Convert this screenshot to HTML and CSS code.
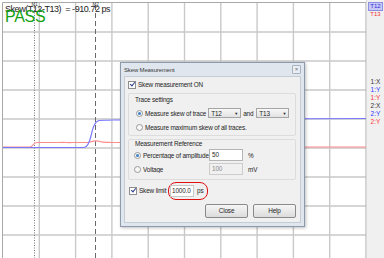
FILE: index.html
```html
<!DOCTYPE html>
<html lang="en">
<head>
	<meta charset="UTF-8">
	<title>Skew Measurement</title>
	<link rel="stylesheet" href="styles.css">
</head>
<body>
	<div id="wrap">
		<div id="plot">
			<svg class="scope" width="366" height="258" viewBox="0 0 366 258">
				<g class="grid">
					<line x1="39.3" y1="3" x2="39.3" y2="258"/>
					<line x1="75.6" y1="3" x2="75.6" y2="258"/>
					<line x1="111.9" y1="3" x2="111.9" y2="258"/>
					<line x1="148.2" y1="3" x2="148.2" y2="258"/>
					<line x1="184.5" y1="3" x2="184.5" y2="258"/>
					<line x1="220.8" y1="3" x2="220.8" y2="258"/>
					<line x1="257.1" y1="3" x2="257.1" y2="258"/>
					<line x1="293.4" y1="3" x2="293.4" y2="258"/>
					<line x1="329.7" y1="3" x2="329.7" y2="258"/>
					<line x1="3" y1="32" x2="366" y2="32"/>
					<line x1="3" y1="61" x2="366" y2="61"/>
					<line x1="3" y1="90" x2="366" y2="90"/>
					<line x1="3" y1="119" x2="366" y2="119"/>
					<line x1="3" y1="148" x2="366" y2="148"/>
					<line x1="3" y1="177" x2="366" y2="177"/>
					<line x1="3" y1="206" x2="366" y2="206"/>
					<line x1="3" y1="235" x2="366" y2="235"/>
				</g>
				<path class="frame" d="M2.5 258 V2.5 H366 V258"/>
				<!-- markers -->
				<line class="m1" x1="34.5" y1="5" x2="34.5" y2="258"/>
				<line class="m2" x1="95.5" y1="5" x2="95.5" y2="258"/>
				<text class="mlabel" x="31.5" y="6">M1</text>
				<text class="mlabel" x="92.5" y="6">M2</text>
				<!-- traces -->
				<path class="tr-red" d="M3 147 H30 C33 147 33 142.5 37 142.5 H60 C64 142 68 143 72 142.5 H88 C92 141 96 140 100 141.5 C104 143 108 142 112 142.5 H200 C204 142.5 206 147 210 147 H366"/>
				<path class="tr-blue" d="M3 147.5 H84 C87 147.5 89 144 91 136 C93 126 95 121 99 120.5 C103 120 108 120.5 112 120 H200 C230 119.5 260 118.5 366 118.5"/>
			</svg>
			<div class="readout">Skew(T12-T13)&nbsp; = -910.72 ps</div>
			<div class="pass">PASS</div>

			<div class="dlg">
				<div class="dlg-title">
					<span>Skew Measurement</span>
					<span class="dlg-x">×</span>
				</div>
				<div class="dlg-body">
					<div class="row top-row">
						<span class="chk on"></span>Skew measurement ON
					</div>
					<div class="group g1">
						<div class="g-label">Trace settings</div>
						<div class="row">
							<span class="radio on"></span><span>Measure skew of trace</span>
							<span class="select">T12<i>▼</i></span>
							<span class="and">and</span>
							<span class="select">T13<i>▼</i></span>
						</div>
						<div class="row">
							<span class="radio"></span>Measure maximum skew of all traces.
						</div>
					</div>
					<div class="group g2">
						<div class="g-label">Measurement Reference</div>
						<div class="row">
							<span class="radio on"></span><span class="lbl">Percentage of amplitude</span>
							<span class="field">50</span><span class="unit">%</span>
						</div>
						<div class="row">
							<span class="radio"></span><span class="lbl">Voltage</span>
							<span class="field off">100</span><span class="unit">mV</span>
						</div>
					</div>
					<div class="row limit-row">
						<span class="chk on"></span><span class="lbl-l">Skew limit</span>
						<span class="ring"><span class="field lim">1000.0</span><span class="ps">ps</span></span>
					</div>
					<div class="btns">
						<span class="btn">Close</span>
						<span class="btn">Help</span>
					</div>
				</div>
			</div>
		</div>
		<div id="side">
			<div class="tags">
				<span class="tag t12">T12</span>
				<span class="tag t13">T13</span>
			</div>
			<div class="chans">
				<span class="c-k">1:X</span>
				<span class="c-b">1:Y</span>
				<span class="c-r">1:Y</span>
				<span class="c-k">2:X</span>
				<span class="c-b">2:Y</span>
				<span class="c-r">2:Y</span>
			</div>
		</div>
	</div>
</body>
</html>
```

FILE: styles.css
```css
body{
	margin: 0px;
	padding: 0px;
	font-family: "Liberation Sans", Arial, sans-serif;
	background: #ffffff;
}
#wrap{
	width: 384px;
	height: 258px;
	display: flex;
	overflow: hidden;
}
#plot{
	width: 366px;
	height: 258px;
	position: relative;
	background: #ffffff;
}
.scope{
	display: block;
}
.grid line{
	stroke: #c9c9c9;
	stroke-width: 1.4;
}
.frame{
	fill: none;
	stroke: #a9a9a9;
	stroke-width: 1;
}
.m1{
	stroke: #7a7a7a;
	stroke-width: 1;
	stroke-dasharray: 1 1.5;
}
.m2{
	stroke: #6a6a6a;
	stroke-width: 1;
	stroke-dasharray: 5 3;
}
.mlabel{
	font-size: 4.5px;
	fill: #333333;
	font-family: "Liberation Sans", Arial, sans-serif;
}
.tr-red{
	fill: none;
	stroke: #ff8c8c;
	stroke-width: 1.2;
}
.tr-blue{
	fill: none;
	stroke: #7878ff;
	stroke-width: 1.2;
}
.readout{
	position: absolute;
	left: 5px;
	top: 4px;
	font-size: 9px;
	letter-spacing: -0.45px;
	color: #222222;
	white-space: nowrap;
}
.pass{
	position: absolute;
	left: 5px;
	top: 8px;
	font-size: 16px;
	line-height: 18px;
	color: #13a113;
	letter-spacing: -0.3px;
}

/* dialog */
.dlg{
	position: absolute;
	left: 120px;
	top: 62px;
	width: 183px;
	height: 163px;
	border: 1px solid #8d9aab;
	background: #dfe6ee;
	box-shadow: 1px 1px 3px rgba(0,0,0,0.25);
	font-size: 6.4px;
	letter-spacing: -0.15px;
	color: #1e1e1e;
	display: flex;
	flex-direction: column;
}
.dlg-title{
	height: 13px;
	display: flex;
	align-items: center;
	justify-content: space-between;
	padding: 0px 3px 0px 3px;
	font-size: 6px;
	color: #3a3a3a;
}
.dlg-x{
	width: 7px;
	height: 7px;
	border: 1px solid #a9b3c0;
	background: #e9eef4;
	font-size: 6px;
	line-height: 7px;
	text-align: center;
	color: #666666;
	border-radius: 1px;
}
.dlg-body{
	flex: 1;
	margin: 0px 3px 3px 3px;
	background: #f0f0f0;
	border: 1px solid #c4ccd6;
	padding: 0px 4px 0px 3px;
}
.row{
	display: flex;
	align-items: center;
	height: 14px;
	white-space: nowrap;
}
.top-row{
	height: 15px;
}
.chk{
	width: 6px;
	height: 6px;
	border: 1px solid #8e8e8e;
	background: #ffffff;
	margin-right: 2px;
	position: relative;
}
.chk.on::after{
	content: "";
	position: absolute;
	left: 1.5px;
	top: -0.5px;
	width: 2px;
	height: 4px;
	border-right: 1.2px solid #2c3e8a;
	border-bottom: 1.2px solid #2c3e8a;
	transform: rotate(40deg);
}
.group{
	border: 1px solid #dcdcdc;
	border-radius: 2px;
	padding: 0px 4px;
}
.g1{
	height: 41px;
	margin-top: 1px;
}
.g2{
	height: 39px;
	margin-top: 3px;
}
.g-label{
	height: 12px;
	line-height: 12px;
	padding-left: 2px;
}
.g2 .g-label{
	height: 8px;
	line-height: 8px;
}
.g1 .row{
	height: 14px;
	padding-left: 3px;
}
.g2 .row{
	height: 14px;
	padding-left: 1px;
}
.radio{
	width: 5px;
	height: 5px;
	border: 1px solid #9a9a9a;
	border-radius: 50%;
	background: #f8f8f8;
	margin-right: 2px;
	position: relative;
}
.radio.on::after{
	content: "";
	position: absolute;
	left: 1px;
	top: 1px;
	width: 3px;
	height: 3px;
	border-radius: 50%;
	background: #3d7fc4;
}
.select{
	width: 33px;
	height: 10px;
	border: 1px solid #a5a5a5;
	background: linear-gradient(#f8f8f8, #e2e2e2);
	display: flex;
	align-items: center;
	justify-content: space-between;
	padding: 0px 2px;
	box-sizing: border-box;
	margin-left: 2px;
}
.select i{
	font-style: normal;
	font-size: 4px;
}
.and{
	margin: 0px 1px 0px 2px;
}
.lbl{
	width: 66px;
	overflow: hidden;
}
.field{
	width: 34px;
	height: 12px;
	border: 1px solid #b5b5b5;
	background: #ffffff;
	box-sizing: border-box;
	padding-left: 2px;
	line-height: 10px;
}
.field.off{
	background: #f0f0f0;
	color: #8a8a8a;
	border-color: #cccccc;
}
.unit{
	margin-left: 5px;
}
.limit-row{
	height: 21px;
	padding-left: 1px;
}
.lbl-l{
	width: 29px;
}
.ring{
	border: 1px solid #e01010;
	border-radius: 8px;
	padding: 2px 4px 2px 1px;
	display: flex;
	align-items: center;
}
.field.lim{
	width: 24px;
	height: 12px;
	padding-left: 1px;
	line-height: 10px;
	border-color: #c8c8c8;
}
.ps{
	margin-left: 3px;
}
.btns{
	display: flex;
	justify-content: flex-end;
	gap: 5px;
	margin-top: 3px;
}
.btn{
	width: 43px;
	height: 14px;
	border: 1px solid #8a8a8a;
	border-radius: 2px;
	background: linear-gradient(#f6f6f6, #dcdcdc);
	box-sizing: border-box;
	text-align: center;
	line-height: 12px;
}

/* side labels */
#side{
	width: 18px;
	height: 258px;
	background: #f0f0f0;
	border-left: 1px solid #dadada;
	display: flex;
	flex-direction: column;
	align-items: center;
	font-size: 6px;
}
.tags{
	display: flex;
	flex-direction: column;
	align-items: center;
	margin-top: 2px;
}
.tag{
	line-height: 7px;
	padding: 0px 1px;
}
.t12{
	color: #3030e0;
	background: #c8c8f4;
	border: 1px solid #8c8ce0;
}
.t13{
	color: #f03030;
}
.chans{
	display: flex;
	flex-direction: column;
	margin-top: 60px;
	font-size: 6.5px;
}
.chans span{
	line-height: 8px;
}
.c-k{
	color: #333333;
}
.c-b{
	color: #3333ff;
}
.c-r{
	color: #ff3333;
}
```
